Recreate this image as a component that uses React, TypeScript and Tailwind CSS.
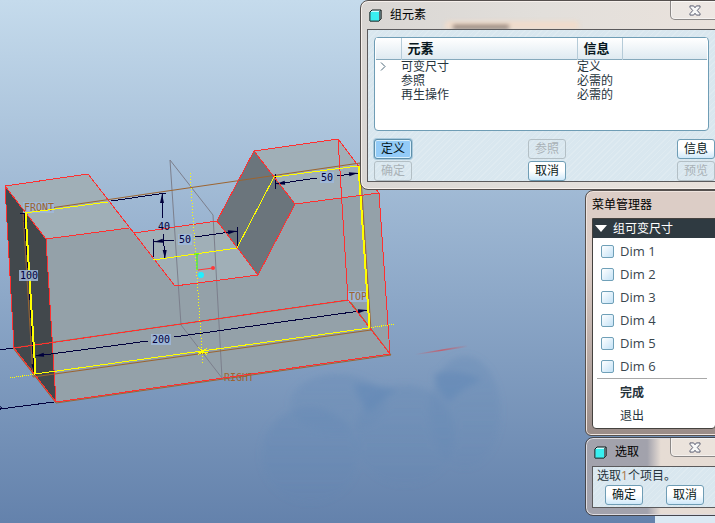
import { ReactNode } from 'react'

const RED = '#ff3030'
const BROWN = '#9c6430'
const YELLOW = '#ffff00'
const NAVY = '#00003c'
const SKY = '#9fb9dc'

const FONT = "font-['Open_Sans','Noto_Sans_CJK_SC',sans-serif]"

interface LabelProps {
  x: number
  y: number
  width: number
  color?: string
  background?: boolean
  children: ReactNode
}

const Label = ({ x, y, width, color = NAVY, background = true, children }: LabelProps) => (
  <g>
    {background && <rect x={x - 1} y={y - 9} width={width} height={11} fill={SKY} opacity={0.85} />}
    <text x={x} y={y} fontSize={10} fill={color} fontFamily="'DejaVu Sans Mono', monospace">
      {children}
    </text>
  </g>
)

// Filled arrow head pointing along +x, rotated into place
const Arrow = ({ x, y, angle }: { x: number; y: number; angle: number }) => (
  <path d="M0 0L-9 -2V2Z" fill={NAVY} transform={`translate(${x} ${y}) rotate(${angle})`} />
)

const Model = () => (
  <svg
    width={600}
    height={523}
    viewBox="0 0 600 523"
    className="absolute top-0 left-0"
    fill="none"
    role="img"
    aria-label="Slotted block"
  >
    <defs>
      <filter id="soft" x="-20%" y="-20%" width="140%" height="140%">
        <feGaussianBlur stdDeviation="3" />
      </filter>
      <linearGradient id="haze" x1="0" y1="0" x2="0" y2="1">
        <stop offset="0" stopColor="#5f86b4" stopOpacity="0.3" />
        <stop offset="1" stopColor="#5f86b4" stopOpacity="0.12" />
      </linearGradient>
      <linearGradient id="fade">
        <stop offset="0" stopColor="#c06070" stopOpacity="0" />
        <stop offset="0.5" stopColor="#c06070" />
        <stop offset="1" stopColor="#c06070" stopOpacity="0" />
      </linearGradient>
    </defs>

    <g filter="url(#soft)">
      <g fill="url(#haze)">
        <ellipse cx="310" cy="455" rx="49" ry="48" />
        <ellipse cx="338" cy="404" rx="48" ry="30" />
        <ellipse cx="405" cy="435" rx="50" ry="50" />
        <ellipse cx="465" cy="412" rx="36" ry="56" />
      </g>
      <g fill="#6389b7" opacity={0.6}>
        <path d="M354 384Q380 384 397 390Q380 400 370 412Q358 402 354 384Z" />
        <path d="M434 374Q460 368 482 380Q462 388 450 402Q438 395 434 374Z" />
      </g>
    </g>
    <path d="M415 354L468 345L468 347L415 355Z" fill="url(#fade)" />

    {/* Faces */}
    <path d="M46 239L129 228L175 286L258 275L295 204L379 193L390 354L56 402Z" fill="#94a1a9" />
    <path d="M5 186L88 174L129 228L46 239Z" fill="#a0afb7" />
    <path d="M134 233L217 221L258 275L175 286Z" fill="#a0afb7" />
    <path d="M254 151L338 139L379 193L295 204Z" fill="#a0afb7" />
    <path d="M217 221L254 151L295 204L258 275Z" fill="#6b757c" />
    <path d="M5 186L46 239L56 402L14 348Z" fill="#42484c" />

    {/* Datum planes */}
    <path d="M170 160L213 215L222 378L181 325Z" stroke="#7c7f8c" />
    <path d="M23 212L360 163L371 330L33 377Z" stroke={BROWN} />
    <path d="M13 348L349 300L391 355L56 403Z" stroke={BROWN} />
    <Label x={24} y={211} width={31} color={BROWN}>FRONT</Label>
    <Label x={349} y={300} width={20} color={BROWN}>TOP</Label>
    <Label x={224} y={381} width={31} color={BROWN} background={false}>RIGHT</Label>

    {/* Dimensions */}
    <g stroke={NAVY} shapeRendering="crispEdges">
      <path d="M111 201L166 193M162 194V218M163 234L165 258" />
      <path d="M153 257V239M154 242L174 240M195 237L237 231M237 227V246" />
      <path d="M275 174V189M276 184L317 178M337 176L358 173" />
      <path d="M36 356L148 341M174 337L367 310" />
      <path d="M24 214L28 268M29 282L34 372M20 213H26" />
      <path d="M0 350L13 348M0 409L54 402" />
    </g>
    <Arrow x={162} y={194} angle={-90} />
    <Arrow x={165} y={259} angle={88} />
    <Arrow x={154} y={242} angle={172} />
    <Arrow x={237} y={231} angle={-8} />
    <Arrow x={276} y={184} angle={172} />
    <Arrow x={358} y={173} angle={-8} />
    <Arrow x={35} y={356} angle={172} />
    <Arrow x={367} y={310} angle={-8} />
    <Arrow x={25} y={213} angle={-94} />
    <Arrow x={34} y={373} angle={86} />
    <path d="M-3 404L2 408L0 410" stroke={NAVY} />

    {/* Edges */}
    <g stroke={RED} shapeRendering="crispEdges">
      <path d="M5 186L88 174L175 286L258 275L295 204L379 193L390 354L56 402L46 239Z" />
      <path d="M5 186L14 348L56 402M46 239L129 228M134 233L217 221L254 151L338 139L379 193" />
      <path d="M217 221L258 275M254 151L295 204M14 348L348 300L338 139M348 300L390 354" />
    </g>

    {/* Sketch section */}
    <g stroke={YELLOW} shapeRendering="crispEdges">
      <path d="M25 213L108 202M153 260L237 248L274 177L358 166" />
      <path d="M26 213L36 374M25 213L35 374L369 328L358 166" />
      <path d="M359 166L370 328" />
      <path d="M190 173L203 365" strokeDasharray="1 2" />
      <path d="M10 378L35 374M369 328L394 324" strokeDasharray="1 1" />
      <path d="M198 347L207 355M207 348L198 355M198 352H208" />
    </g>

    {/* Coordinate triad */}
    <path d="M197 270V254M194 254H199" stroke="#30ff00" />
    <path d="M198 270L213 268" stroke="#ff3838" />
    <circle cx="213" cy="268" r="2" fill="#ff3838" />
    <circle cx="201" cy="275" r="3" fill="#20f0ff" />

    <Label x={158} y={230} width={14} background={false}>40</Label>
    <Label x={179} y={243} width={14}>50</Label>
    <Label x={321} y={181} width={14}>50</Label>
    <Label x={152} y={343} width={20}>200</Label>
    <Label x={20} y={279} width={19}>100</Label>
  </svg>
)

const CubeIcon = () => (
  <svg width="13" height="13" viewBox="0 0 13 13" aria-hidden="true">
    <path d="M1 3L3 1H12V10L10 12H1Z" fill="#c8ffff" stroke="#101818" />
    <path d="M10 3L12 1V10L10 12Z" fill="#6f8a8e" stroke="#101818" strokeWidth="0.5" />
    <path d="M1 3H10V12H1Z" fill="#38f0f0" />
    <path d="M1 3V12H10" fill="none" stroke="#305050" />
  </svg>
)

const CloseButton = () => (
  <button
    aria-label="关闭"
    className="-mr-1 flex h-[19px] w-[50px] items-center justify-center self-start rounded-b-[5px] border border-t-0 border-[#8b8887] bg-white/20 shadow-[inset_0_0_0_1px_rgba(255,255,255,0.5)]"
  >
    <svg width="12" height="11" viewBox="0 0 13 12" fill="#f8f8f8" stroke="#50546a">
      <path d="M1 1H5L6.500 3L8 1H12V2.500L9 6L12 9.500V11H8L6.500 9L5 11H1V9.500L4 6L1 2.500Z" />
    </svg>
  </button>
)

const buttonTones = {
  normal: 'border-[#6f9db5] bg-gradient-to-b from-white from-50% to-[#cfe9fa] text-[#081820]',
  active: 'border-[#5f90aa] bg-[#93cbf7] text-[#081820] shadow-[inset_0_0_0_1px_#d8effc,0_0_0_1px_#a9c9dc]',
  disabled: 'border-[#b3bfc5] text-[#a9b2b7]',
}

interface DialogButtonProps {
  tone?: keyof typeof buttonTones
  children: ReactNode
}

const DialogButton = ({ tone = 'normal', children }: DialogButtonProps) => (
  <button
    disabled={tone === 'disabled'}
    className={`h-5 w-[38px] rounded-[3px] border text-xs leading-4 ${buttonTones[tone]}`}
  >
    {children}
  </button>
)

const HATCH =
  'bg-[#d9e7ef] bg-[repeating-linear-gradient(135deg,transparent_0_3px,rgba(255,255,255,0.15)_3px_4px)]'

const rows = [
  { name: '可变尺寸', info: '定义', current: true },
  { name: '参照', info: '必需的' },
  { name: '再生操作', info: '必需的' },
]

const ElementDialog = () => (
  <section className="absolute top-0 -right-2 left-[360px] rounded-lg border border-[#55504e] bg-linear-to-r from-[#d9d6d3] via-[#e2dfdb] to-[#eae2dc] px-1.5 pb-[7px] shadow-[inset_0_0_0_1px_#f6f0ec]">
    {/* Blurred window showing through the glass title bar */}
    <div className="absolute top-5 left-[84px] h-2 w-[134px] rounded-t bg-[#f0dccb] blur-[2px]">
      <div className="mx-2 mt-1 h-1 w-14 bg-[#8c7a70]" />
    </div>
    <header className="relative flex h-7 items-center justify-between">
      <h1 className="flex items-center gap-2 pl-0.5 text-xs text-black">
        <CubeIcon />
        组元素
      </h1>
      <CloseButton />
    </header>
    <div className={`relative border border-[#5b5a5c] pt-[7px] pl-1.5 ${HATCH}`}>
      <div className="mr-1.5 h-[94px] rounded border border-[#6f9db5] bg-white px-px">
        <table className="w-full table-fixed text-xs text-[#26343c]">
          <thead className="bg-gradient-to-b from-white to-[#dfeaf1]">
            <tr className="h-[21px] border-b border-[#86a9bc] text-left text-[13px] leading-4 text-[#081820]">
              <th className="w-[25px]"></th>
              <th className="w-[176px] border-l border-[#b5cbd8] pl-1.5">元素</th>
              <th className="w-[45px] border-l border-[#b5cbd8] pl-1.5">信息</th>
              <th className="border-l border-[#b5cbd8]"></th>
            </tr>
          </thead>
          <tbody className="font-['Liberation_Sans','Noto_Sans_CJK_SC',sans-serif]">
            {rows.map((row) => (
              <tr key={row.name} className="h-3.5 leading-[14px]">
                <td className="pl-1">
                  {row.current && (
                    <svg width="6" height="9" viewBox="0 0 6 9" fill="none" stroke="#4c6878">
                      <path d="M1 0.500L5 4.500L1 8.500" />
                    </svg>
                  )}
                </td>
                <td>{row.name}</td>
                <td colSpan={2}>{row.info}</td>
              </tr>
            ))}
          </tbody>
        </table>
      </div>
      <div className="grid grid-cols-[154px_1fr_auto] gap-y-0.5 pt-2">
        <DialogButton tone="active">定义</DialogButton>
        <DialogButton tone="disabled">参照</DialogButton>
        <DialogButton>信息</DialogButton>
        <DialogButton tone="disabled">确定</DialogButton>
        <DialogButton>取消</DialogButton>
        <DialogButton tone="disabled">预览</DialogButton>
      </div>
    </div>
  </section>
)

const dims = ['Dim 1', 'Dim 2', 'Dim 3', 'Dim 4', 'Dim 5', 'Dim 6']

const MenuManager = () => (
  <section className="rounded-t-lg rounded-b-md border border-[#55504e] bg-linear-to-b from-[#dccdc6] from-30% to-[#9a8c88] px-1.5 pb-1.5 shadow-[inset_0_0_0_1px_#efe4de]">
    <h2 className="h-[27px] text-xs leading-7 text-black">菜单管理器</h2>
    <div className="rounded-b border border-[#45423f] bg-white pb-px">
      <h3 className="flex h-[19px] items-center gap-1.5 bg-[#2f3a41] pl-0.5 text-xs text-white">
        <svg width="12" height="7" viewBox="0 0 12 7" fill="white">
          <path d="M0 0H12L6 7Z" />
        </svg>
        组可变尺寸
      </h3>
      <ul className="pt-0.5 text-[13px] leading-[23px] text-[#39464e]">
        {dims.map((dim) => (
          <li key={dim}>
            <label className="flex items-center gap-1.5 pl-2">
              <input
                type="checkbox"
                className="size-[13px] appearance-none rounded-xs border border-[#6fa0b8] bg-linear-to-br from-white to-[#c4e2f6]"
              />
              {dim}
            </label>
          </li>
        ))}
      </ul>
      <hr className="mr-2 ml-1 border-[#a8a8a8]" />
      <div className="flex flex-col items-start pt-0.5 pl-[27px] text-xs leading-[23px] text-[#26343c]">
        <button className="font-bold">完成</button>
        <button>退出</button>
      </div>
    </div>
  </section>
)

const SelectDialog = () => (
  <section className="rounded-lg border border-[#45464c] bg-linear-to-r from-[#a2a2ac] from-45% to-[#e6dcd4] to-55% px-1.5 pb-[7px] shadow-[inset_0_0_0_1px_#dddbe0]">
    <header className="flex h-7 items-center justify-between">
      <h2 className="flex items-center gap-2 pl-0.5 text-xs text-black">
        <CubeIcon />
        选取
      </h2>
      <CloseButton />
    </header>
    <div className={`border border-[#5b5a5c] px-1 pb-0.5 text-xs text-[#26343c] ${HATCH}`}>
      <p className="leading-[18px]">
        选取<span className="text-[#a87848]">1</span>个项目。
      </p>
      <div className="flex gap-[23px] pl-2">
        <DialogButton>确定</DialogButton>
        <DialogButton>取消</DialogButton>
      </div>
    </div>
  </section>
)

export default function App() {
  return (
    <main
      className={`relative h-screen min-h-[517px] overflow-hidden bg-linear-to-b from-[#c5dbec] to-[#6482ac] ${FONT}`}
    >
      <Model />
      <ElementDialog />
      <div className="absolute right-0 bottom-0 h-3 w-[60px] bg-[#dbe9f3]" />
      <div className="absolute top-[190px] -right-2 flex w-[138px] flex-col gap-px">
        <MenuManager />
        <SelectDialog />
      </div>
    </main>
  )
}
